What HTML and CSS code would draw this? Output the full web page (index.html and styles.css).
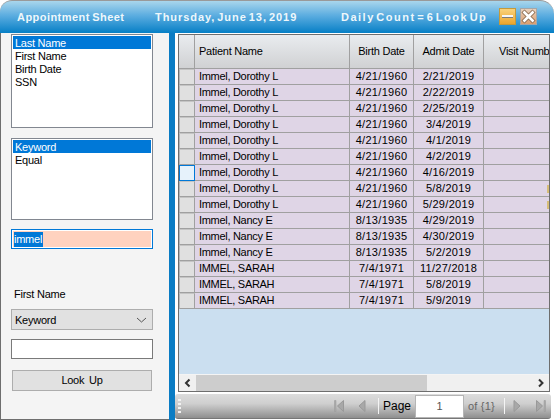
FILE: index.html
```html
<!DOCTYPE html>
<html lang="en">

<head>
    <meta charset="UTF-8">
    <title>Appointment Sheet</title>
    <link rel="stylesheet" href="styles.css">
</head>

<body>
    <div class="window">
        <div class="titlebar">
            <span class="title-name">Appointment Sheet</span>
            <span class="title-date">Thursday, June 13, 2019</span>
            <span class="title-count">Daily Count = 6 Look Up</span>
            <div class="btn-min"><div class="dash"></div></div>
            <div class="btn-close">
                <svg width="15" height="15" viewBox="0 0 15 15">
                    <path d="M2 2 L13 13 M13 2 L2 13" stroke="#8a6a50" stroke-width="4.4" />
                    <path d="M2.5 2.5 L12.5 12.5 M12.5 2.5 L2.5 12.5" stroke="#fff" stroke-width="2.6" />
                </svg>
            </div>
        </div>

        <div class="main">
            <div class="side">
                <div class="listbox list-fields">
                    <div class="item selected">Last Name</div>
                    <div class="item">First Name</div>
                    <div class="item">Birth Date</div>
                    <div class="item">SSN</div>
                </div>
                <div class="listbox list-match">
                    <div class="item selected">Keyword</div>
                    <div class="item">Equal</div>
                </div>
                <div class="search"><span class="search-sel">immel</span></div>
                <div class="label">First Name</div>
                <div class="combo">
                    <span>Keyword</span>
                    <svg width="11" height="6" viewBox="0 0 11 6">
                        <path d="M1 1 L5.5 5 L10 1" fill="none" stroke="#555" />
                    </svg>
                </div>
                <div class="textbox"></div>
                <div class="lookup">Look Up</div>
            </div>
            <div class="strip"></div>

            <div class="content">
                <div class="grid">
                    <div class="grid-view">
                        <table>
                            <colgroup>
                                <col class="c-head">
                                <col class="c-name">
                                <col class="c-birth">
                                <col class="c-admit">
                                <col class="c-visit">
                            </colgroup>
                            <thead>
                                <tr>
                                    <th></th>
                                    <th class="left">Patient Name</th>
                                    <th>Birth Date</th>
                                    <th>Admit Date</th>
                                    <th class="clip">Visit Numb</th>
                                </tr>
                            </thead>
                            <tbody>
                                <tr><td class="rh"></td><td class="left">Immel, Dorothy L</td><td>4/21/1960</td><td>2/21/2019</td><td></td></tr>
                                <tr><td class="rh"></td><td class="left">Immel, Dorothy L</td><td>4/21/1960</td><td>2/22/2019</td><td></td></tr>
                                <tr><td class="rh"></td><td class="left">Immel, Dorothy L</td><td>4/21/1960</td><td>2/25/2019</td><td></td></tr>
                                <tr><td class="rh"></td><td class="left">Immel, Dorothy L</td><td>4/21/1960</td><td>3/4/2019</td><td></td></tr>
                                <tr><td class="rh"></td><td class="left">Immel, Dorothy L</td><td>4/21/1960</td><td>4/1/2019</td><td></td></tr>
                                <tr><td class="rh"></td><td class="left">Immel, Dorothy L</td><td>4/21/1960</td><td>4/2/2019</td><td></td></tr>
                                <tr><td class="rh current"></td><td class="left">Immel, Dorothy L</td><td>4/21/1960</td><td>4/16/2019</td><td></td></tr>
                                <tr><td class="rh"></td><td class="left">Immel, Dorothy L</td><td>4/21/1960</td><td>5/8/2019</td><td class="edge"><span class="tick"></span></td></tr>
                                <tr><td class="rh"></td><td class="left">Immel, Dorothy L</td><td>4/21/1960</td><td>5/29/2019</td><td class="edge"><span class="tick"></span></td></tr>
                                <tr><td class="rh"></td><td class="left">Immel, Nancy E</td><td>8/13/1935</td><td>4/29/2019</td><td></td></tr>
                                <tr><td class="rh"></td><td class="left">Immel, Nancy E</td><td>8/13/1935</td><td>4/30/2019</td><td></td></tr>
                                <tr><td class="rh"></td><td class="left">Immel, Nancy E</td><td>8/13/1935</td><td>5/2/2019</td><td></td></tr>
                                <tr><td class="rh"></td><td class="left">IMMEL, SARAH</td><td>7/4/1971</td><td>11/27/2018</td><td></td></tr>
                                <tr><td class="rh"></td><td class="left">IMMEL, SARAH</td><td>7/4/1971</td><td>5/8/2019</td><td></td></tr>
                                <tr><td class="rh"></td><td class="left">IMMEL, SARAH</td><td>7/4/1971</td><td>5/9/2019</td><td></td></tr>
                            </tbody>
                        </table>
                    </div>
                    <div class="hscroll">
                        <svg width="17" height="16" viewBox="0 0 17 16">
                            <path d="M10.5 4.5 L7 8 L10.5 11.5" fill="none" stroke="#333" stroke-width="2" />
                        </svg>
                        <div class="track"><div class="thumb"></div></div>
                        <svg width="17" height="16" viewBox="0 0 17 16">
                            <path d="M7 4.5 L10.5 8 L7 11.5" fill="none" stroke="#333" stroke-width="2" />
                        </svg>
                    </div>
                </div>

                <div class="pager">
                    <div class="grip"></div>
                    <svg class="pg-first" width="12" height="12" viewBox="0 0 12 12">
                        <path d="M1.5 0.5 H3 V11.5 H1.5 Z" fill="#aaa" stroke="#999" stroke-width="0.5" />
                        <path d="M10.5 0.5 L4.5 6 L10.5 11.5 Z" fill="#a8a8a8" stroke="#999" />
                    </svg>
                    <svg class="pg-prev" width="8" height="12" viewBox="0 0 8 12">
                        <path d="M7 0.5 L1 6 L7 11.5 Z" fill="#a8a8a8" stroke="#999" />
                    </svg>
                    <div class="pg-sep sep-a"></div>
                    <span class="pg-label">Page</span>
                    <div class="pg-input">1</div>
                    <span class="pg-of">of {1}</span>
                    <div class="pg-sep sep-b"></div>
                    <svg class="pg-next" width="8" height="12" viewBox="0 0 8 12">
                        <path d="M1 0.5 L7 6 L1 11.5 Z" fill="#a8a8a8" stroke="#999" />
                    </svg>
                    <svg class="pg-last" width="12" height="12" viewBox="0 0 12 12">
                        <path d="M1.5 0.5 L7.5 6 L1.5 11.5 Z" fill="#a8a8a8" stroke="#999" />
                        <path d="M9 0.5 H10.5 V11.5 H9 Z" fill="#aaa" stroke="#999" stroke-width="0.5" />
                    </svg>
                </div>
            </div>
        </div>
    </div>
</body>

</html>
```

FILE: styles.css
```css
* {
    box-sizing: border-box;
}

html,
body {
    margin: 0;
    background-color: #fff;
    overflow: hidden;
}

.window {
    display: flex;
    flex-direction: column;
    width: 554px;
    height: 420px;
    font-family: "Liberation Sans", Arial, sans-serif;
    font-size: 11px;
    letter-spacing: -0.25px;
    color: #000;
}

.titlebar {
    display: flex;
    align-items: center;
    height: 33px;
    flex-shrink: 0;
    padding: 0 17px 1px 17px;
    border-top: 1px solid #999;
    border-radius: 12px 14px 0 0;
    background: linear-gradient(#a9d6ec, #5cade0 45%, #067fc6);
    color: #eef7fb;
    font-size: 11px;
    font-weight: bold;
}

.title-name {
    width: 138px;
    letter-spacing: 0.45px;
    word-spacing: -1px;
}

.title-date {
    width: 186px;
    letter-spacing: 0.95px;
    word-spacing: -2px;
}

.title-count {
    width: 158px;
    letter-spacing: 1.5px;
    word-spacing: -3px;
    white-space: nowrap;
}

.btn-min {
    display: flex;
    align-items: center;
    justify-content: center;
    width: 17px;
    height: 17px;
    margin-right: 4px;
    border: 1px solid #c49a3c;
    background: linear-gradient(#f9d27b, #eba52e);
}

.dash {
    width: 11px;
    height: 3px;
    background-color: #f6f6f6;
    border-bottom: 1px solid #7b7b7b;
}

.btn-close {
    display: flex;
    align-items: center;
    justify-content: center;
    width: 17px;
    height: 17px;
    border: 1px solid #a6a6a6;
    background: linear-gradient(#e8d0bc, #dc9f6f);
}

.main {
    display: flex;
    flex: 1;
    min-height: 0;
}

.side {
    display: flex;
    flex-direction: column;
    width: 169px;
    padding: 1px 16px 0 10px;
    border-left: 1px solid #6e6e6e;
    border-bottom: 1px solid #6e6e6e;
    background-color: #f4f4f4;
}

.strip {
    width: 6px;
    background-color: #0a7cc4;
}

.listbox {
    width: 142px;
    padding: 1px;
    border: 1px solid #828790;
    background-color: #fff;
}

.list-fields {
    height: 94px;
}

.list-match {
    height: 82px;
    margin-top: 10px;
}

.item {
    height: 13px;
    padding-left: 2px;
    line-height: 15px;
}

.selected {
    background-color: #0078d7;
    color: #fff;
}

.search {
    width: 142px;
    height: 20px;
    margin-top: 9px;
    padding: 1px;
    border: 1px solid #0078d7;
    background-color: #ffd2bf;
    box-shadow: inset 0 0 0 1px #fff;
    line-height: 16px;
}

.search-sel {
    display: inline-block;
    height: 15px;
    margin: 1px 0 0 1px;
    padding-right: 1px;
    background-color: #0078d7;
    color: #fff;
    line-height: 15px;
}

.label {
    margin-top: 38px;
    padding-left: 3px;
    line-height: 14px;
}

.combo {
    display: flex;
    align-items: center;
    justify-content: space-between;
    width: 142px;
    height: 21px;
    margin-top: 8px;
    padding: 0 5px 0 3px;
    border: 1px solid #adadad;
    background-color: #e1e1e1;
}

.textbox {
    width: 142px;
    height: 20px;
    margin-top: 9px;
    border: 1px solid #7a7a7a;
    background-color: #fff;
}

.lookup {
    width: 140px;
    height: 21px;
    margin: 11px 0 0 1px;
    border: 1px solid #adadad;
    background-color: #e1e1e1;
    text-align: center;
    line-height: 19px;
    word-spacing: 2px;
}

.content {
    display: flex;
    flex-direction: column;
    width: 379px;
    padding: 1px 0 1px 3px;
}

.grid {
    display: flex;
    flex-direction: column;
    width: 372px;
    height: 358px;
    border: 1px solid #6e6e6e;
}

.grid-view {
    flex: 1;
    min-height: 0;
    overflow: hidden;
    background-color: #cbdff0;
}

table {
    width: 370px;
    table-layout: fixed;
    border-collapse: separate;
    border-spacing: 0;
}

.c-head {
    width: 16px;
}

.c-name {
    width: 155px;
}

.c-birth {
    width: 64px;
}

.c-admit {
    width: 70px;
}

.c-visit {
    width: 65px;
}

th {
    height: 34px;
    padding: 0 0 2px;
    border-right: 1px solid #a0a0a0;
    border-bottom: 1px solid #a0a0a0;
    background: linear-gradient(#e9ecef, #d0d1d3);
    font-weight: normal;
    text-align: center;
    white-space: nowrap;
}

th.clip {
    border-right: 0;
    padding-left: 15px;
    text-align: left;
}

td {
    height: 16px;
    padding: 0;
    border-right: 1px solid #a0a0a0;
    border-bottom: 1px solid #a0a0a0;
    background-color: #dfd5e6;
    line-height: 15px;
    letter-spacing: 0.3px;
    text-align: center;
    white-space: nowrap;
}

td:last-child {
    border-right: 0;
}

td.left {
    padding-left: 4px;
    letter-spacing: -0.3px;
    text-align: left;
}

th.left {
    padding-left: 4px;
    text-align: left;
}

td.rh {
    border-left: 1px solid #b4b4b4;
    border-top: 1px solid #c4c4c4;
    background-color: #e0e0e0;
}

td.current {
    border: 1px solid #0078d7;
    background-color: #e6f2fb;
}

td.edge {
    text-align: right;
}

.tick {
    display: inline-block;
    width: 2px;
    height: 8px;
    vertical-align: middle;
    background-color: #d6bd78;
}

.hscroll {
    display: flex;
    height: 17px;
    flex-shrink: 0;
    background-color: #f0f0f0;
    border-top: 1px solid #f4f4f4;
}

.hscroll svg {
    flex-shrink: 0;
}

.track {
    flex: 1;
    min-width: 0;
}

.thumb {
    width: 231px;
    height: 100%;
    background-color: #cdcdcd;
}

.pager {
    display: flex;
    align-items: center;
    width: 376px;
    height: 25px;
    margin: 2px 0 0 -3px;
    padding-left: 3px;
    border-bottom: 1px solid #777;
    border-radius: 3px;
    background: linear-gradient(#dcdcdc, #cfcfcf 40%, #8f8f8f);
    white-space: nowrap;
}

.pager > * {
    flex-shrink: 0;
}

.grip {
    width: 3px;
    height: 15px;
    margin-right: 152px;
    background: repeating-linear-gradient(#f2f2f2 0 2px, transparent 2px 4px);
}

.pg-prev {
    margin-left: 13px;
}

.pg-sep {
    width: 1px;
    height: 16px;
    background-color: #f4f4f4;
}

.sep-a {
    margin-left: 12px;
}

.pg-label {
    width: 26px;
    margin-left: 4px;
    font-size: 12px;
    letter-spacing: 0;
}

.pg-input {
    width: 49px;
    height: 23px;
    margin-left: 6px;
    border: 1px solid #b5b5b5;
    background-color: #fff;
    color: #555;
    text-align: center;
    line-height: 21px;
}

.pg-of {
    width: 28px;
    margin-left: 4px;
    letter-spacing: 0.2px;
    color: #666;
}

.sep-b {
    margin-left: 8px;
}

.pg-next {
    margin-left: 8px;
}

.pg-last {
    margin-left: 14px;
}
```
